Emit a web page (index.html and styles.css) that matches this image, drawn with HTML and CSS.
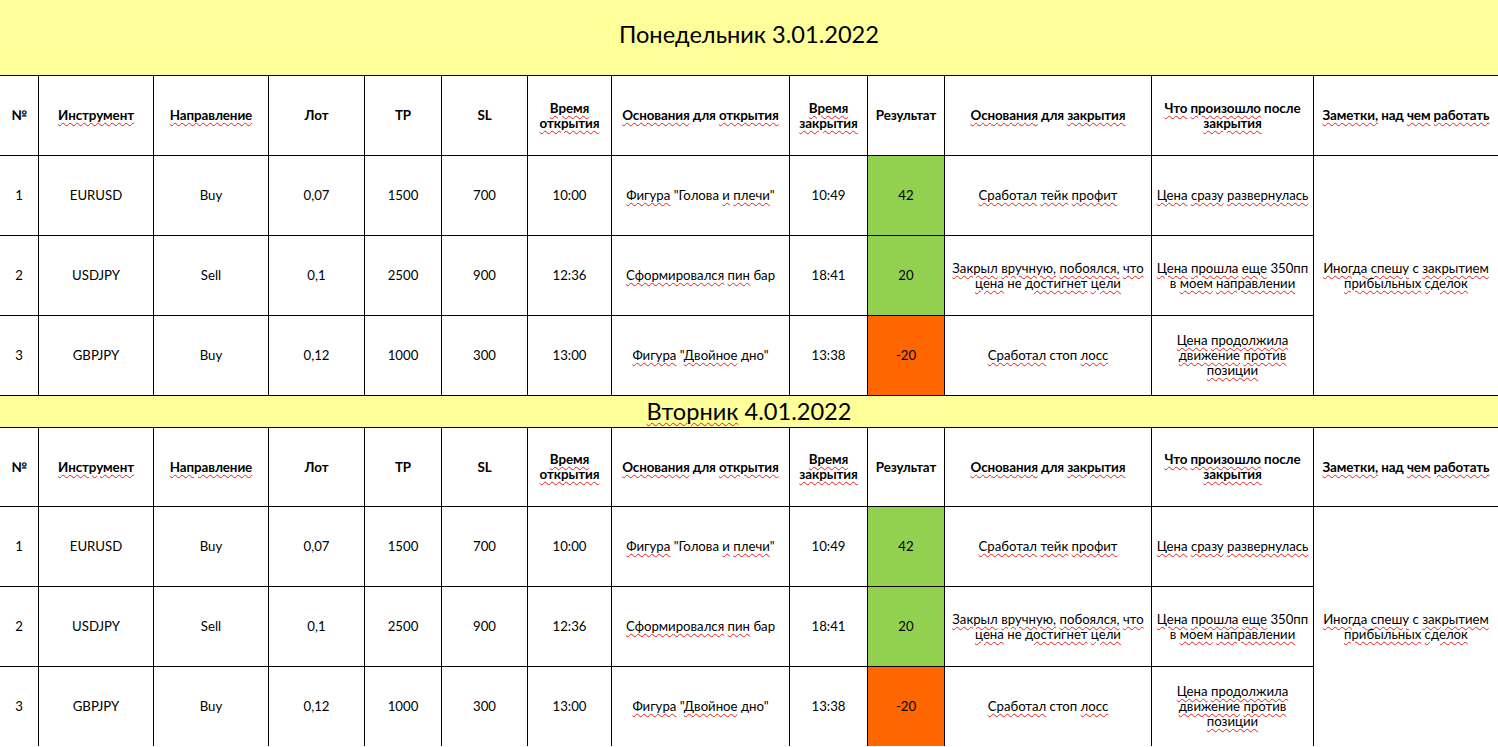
FILE: index.html
```html
<!DOCTYPE html>
<html lang="ru">
<head>
<meta charset="utf-8">
<title>Журнал сделок</title>
<link rel="stylesheet" href="styles.css">
</head>
<body>
<div class="sheet">
  <section class="day day-big">
    <div class="title"><span class="title-text">Понедельник 3.01.2022</span></div>
    <div class="c th"><p>№</p></div>
    <div class="c th"><p><span class="sp">Инструмент</span></p></div>
    <div class="c th"><p><span class="sp">Направление</span></p></div>
    <div class="c th"><p>Лот</p></div>
    <div class="c th"><p>TP</p></div>
    <div class="c th"><p>SL</p></div>
    <div class="c th"><p><span class="sp">Время</span><br><span class="sp">открытия</span></p></div>
    <div class="c th"><p><span class="sp">Основания</span> для <span class="sp">открытия</span></p></div>
    <div class="c th"><p><span class="sp">Время</span><br><span class="sp">закрытия</span></p></div>
    <div class="c th"><p>Результат</p></div>
    <div class="c th"><p><span class="sp">Основания</span> для <span class="sp">закрытия</span></p></div>
    <div class="c th"><p><span class="sp">Что</span> <span class="sp">произошло</span> после<br><span class="sp">закрытия</span></p></div>
    <div class="c th"><p><span class="sp">Заметки,</span> над <span class="sp">чем</span> <span class="sp">работать</span></p></div>

    <div class="c"><p>1</p></div>
    <div class="c"><p>EURUSD</p></div>
    <div class="c"><p>Buy</p></div>
    <div class="c"><p>0,07</p></div>
    <div class="c"><p>1500</p></div>
    <div class="c"><p>700</p></div>
    <div class="c"><p>10:00</p></div>
    <div class="c"><p><span class="sp">Фигура</span> "Голова <span class="sp">и</span> <span class="sp">плечи</span>"</p></div>
    <div class="c"><p>10:49</p></div>
    <div class="c win"><p>42</p></div>
    <div class="c"><p><span class="sp">Сработал</span> <span class="sp">тейк</span> <span class="sp">профит</span></p></div>
    <div class="c"><p><span class="sp">Цена</span> <span class="sp">сразу</span> <span class="sp">развернулась</span></p></div>
    <div class="c note"><p><span class="sp">Иногда</span> <span class="sp">спешу</span> с <span class="sp">закрытием</span><br><span class="sp">прибыльных</span> <span class="sp">сделок</span></p></div>

    <div class="c"><p>2</p></div>
    <div class="c"><p>USDJPY</p></div>
    <div class="c"><p>Sell</p></div>
    <div class="c"><p>0,1</p></div>
    <div class="c"><p>2500</p></div>
    <div class="c"><p>900</p></div>
    <div class="c"><p>12:36</p></div>
    <div class="c"><p><span class="sp">Сформировался</span> <span class="sp">пин</span> бар</p></div>
    <div class="c"><p>18:41</p></div>
    <div class="c win"><p>20</p></div>
    <div class="c"><p><span class="sp">Закрыл</span> <span class="sp">вручную,</span> <span class="sp">побоялся,</span> <span class="sp">что</span><br><span class="sp">цена</span> не <span class="sp">достигнет</span> <span class="sp">цели</span></p></div>
    <div class="c"><p><span class="sp">Цена</span> <span class="sp">прошла</span> <span class="sp">еще</span> 350пп<br>в <span class="sp">моем</span> <span class="sp">направлении</span></p></div>

    <div class="c"><p>3</p></div>
    <div class="c"><p>GBPJPY</p></div>
    <div class="c"><p>Buy</p></div>
    <div class="c"><p>0,12</p></div>
    <div class="c"><p>1000</p></div>
    <div class="c"><p>300</p></div>
    <div class="c"><p>13:00</p></div>
    <div class="c"><p><span class="sp">Фигура</span> "<span class="sp">Двойное</span> дно"</p></div>
    <div class="c"><p>13:38</p></div>
    <div class="c loss"><p>-20</p></div>
    <div class="c"><p><span class="sp">Сработал</span> стоп <span class="sp">лосс</span></p></div>
    <div class="c"><p><span class="sp">Цена</span> <span class="sp">продолжила</span><br><span class="sp">движение</span> <span class="sp">против</span><br><span class="sp">позиции</span></p></div>
  </section>

  <section class="day day-small">
    <div class="title"><span class="title-text"><span class="sp">Вторник</span> 4.01.2022</span></div>
    <div class="c th"><p>№</p></div>
    <div class="c th"><p><span class="sp">Инструмент</span></p></div>
    <div class="c th"><p><span class="sp">Направление</span></p></div>
    <div class="c th"><p>Лот</p></div>
    <div class="c th"><p>TP</p></div>
    <div class="c th"><p>SL</p></div>
    <div class="c th"><p><span class="sp">Время</span><br><span class="sp">открытия</span></p></div>
    <div class="c th"><p><span class="sp">Основания</span> для <span class="sp">открытия</span></p></div>
    <div class="c th"><p><span class="sp">Время</span><br><span class="sp">закрытия</span></p></div>
    <div class="c th"><p>Результат</p></div>
    <div class="c th"><p><span class="sp">Основания</span> для <span class="sp">закрытия</span></p></div>
    <div class="c th"><p><span class="sp">Что</span> <span class="sp">произошло</span> после<br><span class="sp">закрытия</span></p></div>
    <div class="c th"><p><span class="sp">Заметки,</span> над <span class="sp">чем</span> <span class="sp">работать</span></p></div>

    <div class="c"><p>1</p></div>
    <div class="c"><p>EURUSD</p></div>
    <div class="c"><p>Buy</p></div>
    <div class="c"><p>0,07</p></div>
    <div class="c"><p>1500</p></div>
    <div class="c"><p>700</p></div>
    <div class="c"><p>10:00</p></div>
    <div class="c"><p><span class="sp">Фигура</span> "Голова <span class="sp">и</span> <span class="sp">плечи</span>"</p></div>
    <div class="c"><p>10:49</p></div>
    <div class="c win"><p>42</p></div>
    <div class="c"><p><span class="sp">Сработал</span> <span class="sp">тейк</span> <span class="sp">профит</span></p></div>
    <div class="c"><p><span class="sp">Цена</span> <span class="sp">сразу</span> <span class="sp">развернулась</span></p></div>
    <div class="c note"><p><span class="sp">Иногда</span> <span class="sp">спешу</span> с <span class="sp">закрытием</span><br><span class="sp">прибыльных</span> <span class="sp">сделок</span></p></div>

    <div class="c"><p>2</p></div>
    <div class="c"><p>USDJPY</p></div>
    <div class="c"><p>Sell</p></div>
    <div class="c"><p>0,1</p></div>
    <div class="c"><p>2500</p></div>
    <div class="c"><p>900</p></div>
    <div class="c"><p>12:36</p></div>
    <div class="c"><p><span class="sp">Сформировался</span> <span class="sp">пин</span> бар</p></div>
    <div class="c"><p>18:41</p></div>
    <div class="c win"><p>20</p></div>
    <div class="c"><p><span class="sp">Закрыл</span> <span class="sp">вручную,</span> <span class="sp">побоялся,</span> <span class="sp">что</span><br><span class="sp">цена</span> не <span class="sp">достигнет</span> <span class="sp">цели</span></p></div>
    <div class="c"><p><span class="sp">Цена</span> <span class="sp">прошла</span> <span class="sp">еще</span> 350пп<br>в <span class="sp">моем</span> <span class="sp">направлении</span></p></div>

    <div class="c"><p>3</p></div>
    <div class="c"><p>GBPJPY</p></div>
    <div class="c"><p>Buy</p></div>
    <div class="c"><p>0,12</p></div>
    <div class="c"><p>1000</p></div>
    <div class="c"><p>300</p></div>
    <div class="c"><p>13:00</p></div>
    <div class="c"><p><span class="sp">Фигура</span> "<span class="sp">Двойное</span> дно"</p></div>
    <div class="c"><p>13:38</p></div>
    <div class="c loss"><p>-20</p></div>
    <div class="c"><p><span class="sp">Сработал</span> стоп <span class="sp">лосс</span></p></div>
    <div class="c"><p><span class="sp">Цена</span> <span class="sp">продолжила</span><br><span class="sp">движение</span> <span class="sp">против</span><br><span class="sp">позиции</span></p></div>
  </section>
</div>
</body>
</html>
```

FILE: styles.css
```css
html, body {
  margin: 0;
  padding: 0;
  background: #ffffff;
}

body {
  width: 1498px;
  height: 747px;
  overflow: hidden;
  font-family: Lato, "Noto Sans", "Liberation Sans", sans-serif;
  color: #000;
}

.sheet {
  display: flex;
  flex-direction: column;
  gap: 1px;
  background: #000;
  width: 1498px;
}

.day {
  display: grid;
  grid-template-columns: 38px 114px 114px 95px 76px 85px 83px 177px 77px 76px 206px 161px 184px;
  gap: 1px;
  background: #000;
}

.day-big {
  grid-template-rows: 75px 79px 79px 79px 79px;
}

.day-small {
  grid-template-rows: 31px 78px 79px 79px 79px;
}

.title {
  grid-column: 1 / -1;
  background: #ffff99;
  display: flex;
  align-items: center;
  justify-content: center;
}

.title-text {
  font-size: 23.6px;
  line-height: 26px;
}

.day-big .title-text {
  margin-bottom: 7px;
}

.day-small .title-text {
  margin-bottom: 2px;
}

.c {
  background: #fff;
  display: flex;
  align-items: center;
  justify-content: center;
  text-align: center;
  font-size: 13.2px;
  line-height: 15px;
  white-space: nowrap;
  overflow: hidden;
}

.c p {
  margin: 0;
}

.th {
  font-weight: 700;
  font-size: 13.4px;
  letter-spacing: -0.1px;
}

.win {
  background: #92d050;
}

.loss {
  background: #ff6600;
}

.note {
  grid-column: 13;
  grid-row: 3 / span 3;
}

.sp {
  text-decoration-line: underline;
  text-decoration-style: wavy;
  text-decoration-color: #e0201c;
  text-decoration-thickness: 1px;
  text-underline-offset: 2px;
}
```
